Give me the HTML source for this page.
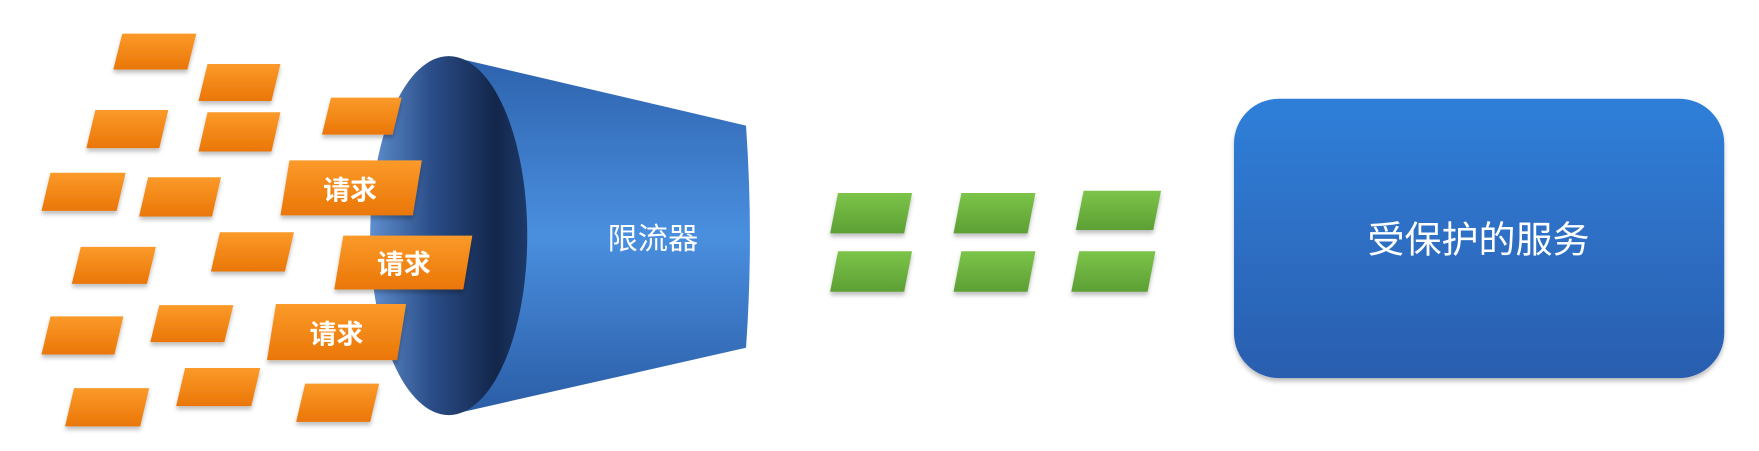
<!DOCTYPE html>
<html><head><meta charset="utf-8"><style>
html,body{margin:0;padding:0;background:#fff;width:1759px;height:451px;overflow:hidden}
svg{display:block}
text{font-family:"Liberation Sans","Noto Sans CJK SC",sans-serif;fill:#fff}
</style></head><body>
<svg width="1759" height="451" viewBox="0 0 1568 402" preserveAspectRatio="none" xmlns="http://www.w3.org/2000/svg">
<defs>
<linearGradient id="og" x1="0" y1="0" x2="0" y2="1"><stop offset="0" stop-color="#fb9a2a"/><stop offset="1" stop-color="#ea7606"/></linearGradient>
<linearGradient id="gg" x1="0" y1="0" x2="0" y2="1"><stop offset="0" stop-color="#7cc449"/><stop offset="1" stop-color="#5c9f34"/></linearGradient>
<linearGradient id="body" x1="0" y1="0" x2="0" y2="1"><stop offset="0" stop-color="#2d62ad"/><stop offset="0.5" stop-color="#4a8fdf"/><stop offset="1" stop-color="#2a5ca5"/></linearGradient>
<linearGradient id="face" x1="0" y1="0" x2="1" y2="0"><stop offset="0" stop-color="#5f8fd0"/><stop offset="0.4" stop-color="#2a4c86"/><stop offset="0.8" stop-color="#13264a"/><stop offset="1" stop-color="#1d3a6a"/></linearGradient>
<linearGradient id="box" x1="0" y1="0" x2="0" y2="1"><stop offset="0" stop-color="#2f7fd9"/><stop offset="1" stop-color="#2b5eaf"/></linearGradient>
<filter id="sh" x="-10%" y="-10%" width="130%" height="140%"><feDropShadow dx="0" dy="3" stdDeviation="2" flood-color="#000" flood-opacity="0.25"/></filter>
</defs>
<path d="M400 50 L665 112 Q672 211 665 310 L400 370 Z" fill="url(#body)"/>
<ellipse cx="400" cy="210" rx="70" ry="160" fill="url(#face)"/>
<g fill="url(#og)" filter="url(#sh)">
<polygon points="109,30 175,30 167,62 101,62"/>
<polygon points="185,57 250,57 242,90 177,90"/>
<polygon points="85,98 150,98 142,132 77,132"/>
<polygon points="185,100 250,100 242,135 177,135"/>
<polygon points="295,87 358,87 350,120 287,120"/>
<polygon points="45,154 112,154 104,188 37,188"/>
<polygon points="132,158 197,158 189,193 124,193"/>
<polygon points="258,143 376,143 368,192 250,192"/>
<polygon points="72,220 139,220 131,253 64,253"/>
<polygon points="196,207 262,207 254,242 188,242"/>
<polygon points="306,210 421,210 413,258 298,258"/>
<polygon points="45,282 110,282 102,316 37,316"/>
<polygon points="142,272 208,272 200,305 134,305"/>
<polygon points="246,271 362,271 354,321 238,321"/>
<polygon points="66,346 133,346 125,380 58,380"/>
<polygon points="165,328 232,328 224,362 157,362"/>
<polygon points="272,342 338,342 330,376 264,376"/>
</g>
<text x="312" y="178" font-size="24" font-weight="bold" text-anchor="middle">请求</text>
<text x="360" y="244" font-size="24" font-weight="bold" text-anchor="middle">请求</text>
<text x="300" y="306" font-size="24" font-weight="bold" text-anchor="middle">请求</text>
<text x="582" y="222" font-size="27" text-anchor="middle">限流器</text>
<g fill="url(#gg)" filter="url(#sh)">
<polygon points="747,172 813,172 806,208 740,208"/>
<polygon points="857,172 923,172 916,208 850,208"/>
<polygon points="966,170 1035,170 1028,205 959,205"/>
<polygon points="747,224 813,224 806,260 740,260"/>
<polygon points="857,224 923,224 916,260 850,260"/>
<polygon points="962,224 1030,224 1023,260 955,260"/>
</g>
<rect x="1100" y="88" width="437" height="249" rx="40" fill="url(#box)" filter="url(#sh)"/>
<text x="1318" y="225" font-size="33" text-anchor="middle">受保护的服务</text>
</svg>
</body></html>
